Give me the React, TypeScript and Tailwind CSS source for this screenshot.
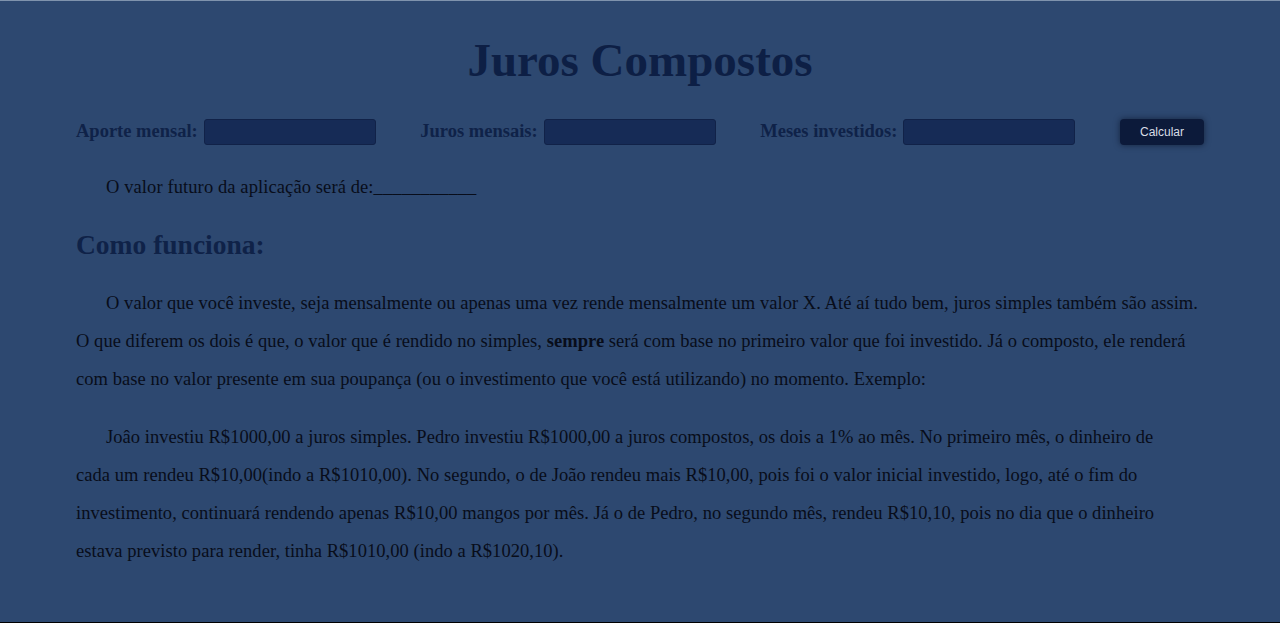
import React from "react";

export default function App() {
  const serif = { fontFamily: '"Liberation Serif", "Times New Roman", serif' };
  return (
    <div
      className="w-[1280px] h-[623px] bg-[#2d4870] border-t border-t-[#7f93ad] border-b border-b-black overflow-hidden"
      style={serif}
    >
      <div className="mx-[76px]">
        <h1 className="text-center text-[47px] font-bold text-[#0d1f45] leading-none pt-[36px]">
          Juros Compostos
        </h1>
        <div className="flex items-center justify-between mt-[35px] h-[26px]">
          <div className="flex items-center gap-[6px]">
            <span className="text-[18.5px] font-bold text-[#0f2248]">Aporte mensal:</span>
            <div className="w-[172px] h-[26px] rounded-[3px] bg-[#162b56] border border-[#112248]" />
          </div>
          <div className="flex items-center gap-[6px]">
            <span className="text-[18.5px] font-bold text-[#0f2248]">Juros mensais:</span>
            <div className="w-[172px] h-[26px] rounded-[3px] bg-[#162b56] border border-[#112248]" />
          </div>
          <div className="flex items-center gap-[6px]">
            <span className="text-[18.5px] font-bold text-[#0f2248]">Meses investidos:</span>
            <div className="w-[172px] h-[26px] rounded-[3px] bg-[#162b56] border border-[#112248]" />
          </div>
          <button
            className="w-[84px] h-[26px] rounded-[4px] bg-[#0c1a3a] text-[#d8dde6] text-[12px] shadow-[0_0_6px_rgba(5,12,30,0.6)]"
            style={{ fontFamily: '"Liberation Sans", Arial, sans-serif' }}
          >
            Calcular
          </button>
        </div>
        <p className="mt-[23px] text-[18.5px] leading-[38px] indent-[30px] text-[#080d1a] tracking-[0.1px]">
          O valor futuro da aplicação será de:___________
        </p>
        <h2 className="mt-[20px] text-[27.5px] font-bold text-[#0f2248] leading-[38px]">
          Como funciona:
        </h2>
        <p className="mt-[20px] text-[18.5px] leading-[38px] indent-[30px] text-[#080d1a] tracking-[0.05px]">
          O valor que você investe, seja mensalmente ou apenas uma vez rende mensalmente um valor X. Até aí tudo bem, juros simples também são assim. O que diferem os dois é que, o valor que é rendido no simples, <b>sempre</b> será com base no primeiro valor que foi investido. Já o composto, ele renderá com base no valor presente em sua poupança (ou o investimento que você está utilizando) no momento. Exemplo:
        </p>
        <p className="mt-[20px] text-[18.5px] leading-[38px] indent-[30px] text-[#080d1a] pr-[34px] tracking-[0.05px]">
          Joâo investiu R$1000,00 a juros simples. Pedro investiu R$1000,00 a juros compostos, os dois a 1% ao mês. No primeiro mês, o dinheiro de cada um rendeu R$10,00(indo a R$1010,00). No segundo, o de João rendeu mais R$10,00, pois foi o valor inicial investido, logo, até o fim do investimento, continuará rendendo apenas R$10,00 mangos por mês. Já o de Pedro, no segundo mês, rendeu R$10,10, pois no dia que o dinheiro estava previsto para render, tinha R$1010,00 (indo a R$1020,10).
        </p>
      </div>
    </div>
  );
}
